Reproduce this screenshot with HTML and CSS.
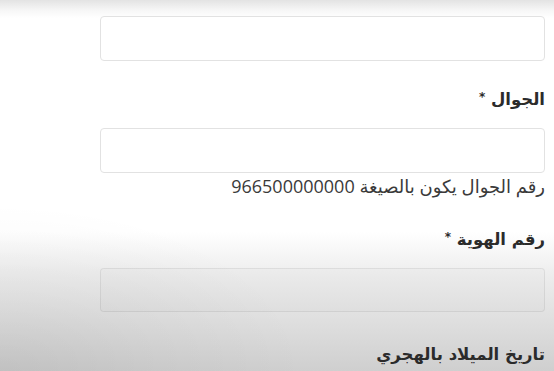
FILE: index.html
```html
<!DOCTYPE html>
<html lang="ar" dir="rtl">
<head>
<meta charset="utf-8">
<title>نموذج</title>
<link rel="stylesheet" href="styles.css">
</head>
<body>
<main class="page">
  <form class="form">
    <div class="field">
      <input class="input" type="text">
    </div>
    <div class="field">
      <label class="label">الجوال <span class="req">*</span></label>
      <input class="input" type="text">
      <p class="hint">رقم الجوال يكون بالصيغة 966500000000</p>
    </div>
    <div class="field">
      <label class="label">رقم الهوية <span class="req">*</span></label>
      <input class="input input-disabled" type="text" disabled>
    </div>
    <div class="field">
      <label class="label">تاريخ الميلاد بالهجري</label>
    </div>
  </form>
</main>
</body>
</html>
```
FILE: styles.css
```css
html, body {
  margin: 0;
  height: 100%;
}
body {
  font-family: "DejaVu Sans", "Noto Sans", sans-serif;
  color: #2e2e2e;
  background:
    radial-gradient(ellipse 55% 45% at 0 100%, rgba(0,0,0,0.07) 0, rgba(0,0,0,0.03) 50%, rgba(0,0,0,0) 100%),
    linear-gradient(to bottom, #e3e3e3 0, #f6f6f6 10px, #ffffff 18px, #ffffff 232px, #ededed 275px, #dcdcdc 330px, #cfcfcf 371px);
  overflow: hidden;
}
.page {
  padding: 16px 9px 0 100px;
}
.form {
  display: flex;
  flex-direction: column;
}
.field {
  display: flex;
  flex-direction: column;
}
.input {
  display: block;
  box-sizing: border-box;
  width: 100%;
  height: 45px;
  margin: 0;
  border: 1px solid #e2e2e2;
  border-radius: 4px;
  background: #ffffff;
  font: inherit;
}
.input-disabled {
  height: 44px;
  background: rgba(0,0,0,0.012);
  border-color: rgba(0,0,0,0.07);
}
.label {
  display: block;
  font-weight: bold;
  font-size: 16.5px;
  line-height: 24px;
  margin: 27px 0 16px 0;
  color: #2b2b2b;
}
.field:nth-child(3) .label {
  margin-top: 32px;
}
.field:nth-child(4) .label {
  margin-top: 31px;
}
.req {
  font-size: 12px;
  line-height: 0;
  vertical-align: 4px;
}
.hint {
  margin: 3px 0 0 0;
  font-family: "Open Sans", "DejaVu Sans", sans-serif;
  font-size: 18px;
  line-height: 20px;
  color: #3a3a3a;
}
```
